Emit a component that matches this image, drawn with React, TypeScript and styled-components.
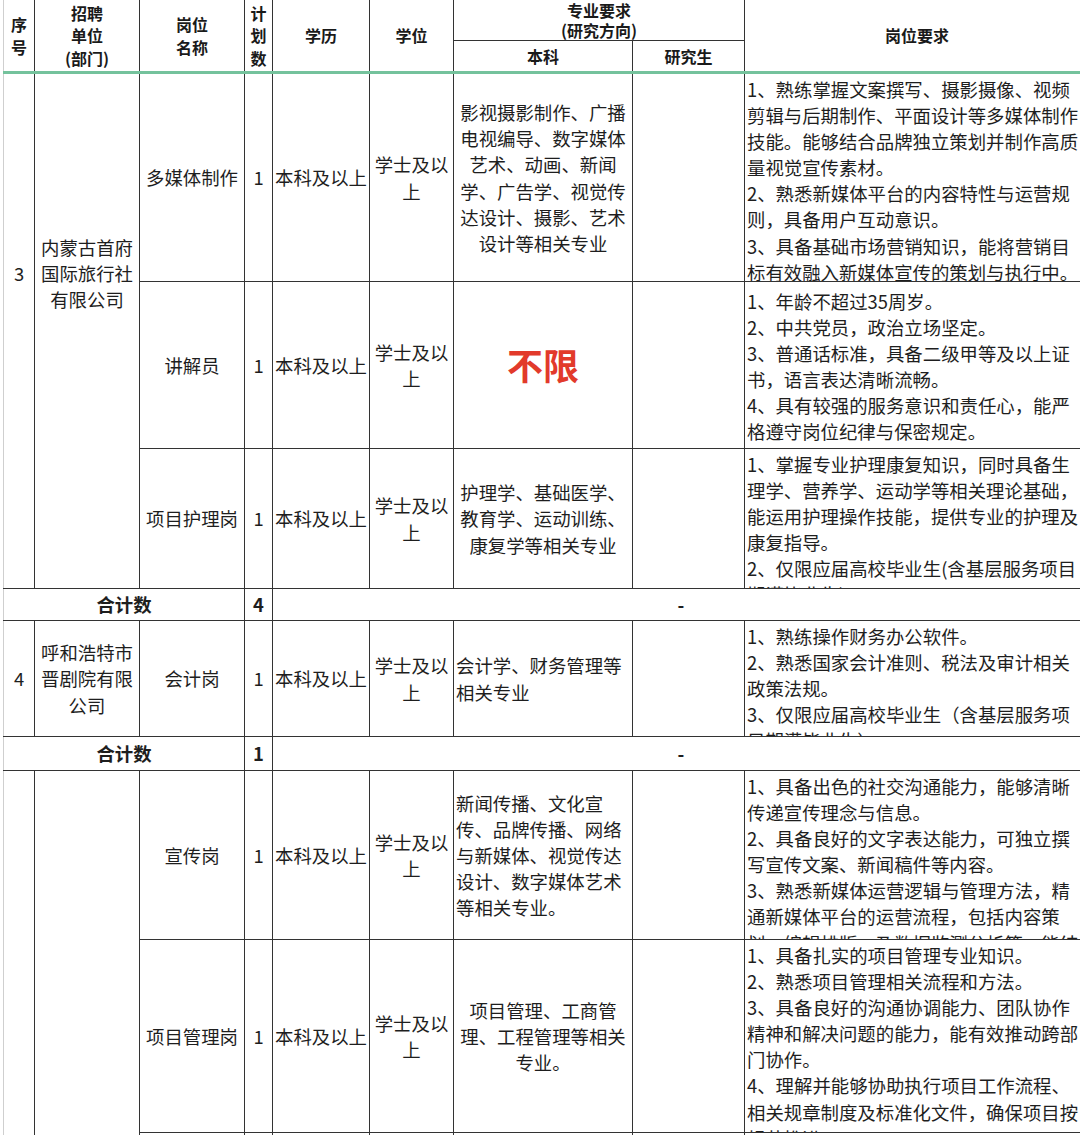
import React from "react";
import styled, { createGlobalStyle } from "styled-components";

const Global = createGlobalStyle`
  html, body { margin: 0; padding: 0; background: #ffffff; }
  body {
    width: 1080px;
    height: 1135px;
    overflow: hidden;
    font-family: "Noto Sans CJK SC", "Noto Sans", sans-serif;
    color: #1e1e1e;
  }
`;

const LINE = "#333333";
const EDGE = "#cfcfcf";
const GREEN = "#74c29c";

const Sheet = styled.table`
  border-collapse: collapse;
  table-layout: fixed;
  width: 1086px;
  margin-left: 3px;
  font-size: 18.4px;
  line-height: 26.1px;
`;

const HeadRow = styled.tr<{ $h: number }>`
  height: ${(p) => p.$h}px;
`;

const Th = styled.th<{ $lh?: number; $green?: boolean; $edge?: boolean }>`
  border: 1px solid ${LINE};
  border-left-color: ${(p) => (p.$edge ? EDGE : LINE)};
  border-top: none;
  border-bottom: ${(p) => (p.$green ? `3px solid ${GREEN}` : `1px solid ${LINE}`)};
  padding: 0;
  font-size: 16px;
  font-weight: 700;
  line-height: ${(p) => p.$lh ?? 22.5}px;
  text-align: center;
  vertical-align: middle;
  color: #1a1a1a;
`;

const Row = styled.tr<{ $h: number }>`
  height: ${(p) => p.$h}px;
`;

const Td = styled.td<{
  $align?: "left" | "center";
  $bold?: boolean;
  $padTop?: number;
  $edge?: boolean;
}>`
  border: 1px solid ${LINE};
  border-left-color: ${(p) => (p.$edge ? EDGE : LINE)};
  padding: ${(p) => (p.$padTop !== undefined ? `${p.$padTop}px 0 0` : "0")};
  padding-left: ${(p) => (p.$align === "left" ? "2px" : "0")};
  text-align: ${(p) => p.$align ?? "center"};
  vertical-align: ${(p) => (p.$padTop !== undefined ? "top" : "middle")};
  font-weight: ${(p) => (p.$bold ? 700 : 400)};
  overflow: hidden;
`;

const ReqCell = styled.td`
  border: 1px solid ${LINE};
  padding: 0;
  vertical-align: top;
  text-align: left;
`;

const ReqBox = styled.div<{ $h: number }>`
  box-sizing: border-box;
  width: 334px;
  height: ${(p) => p.$h}px;
  padding: 2px 0 0 2px;
  overflow: hidden;
  display: flex;
  flex-direction: column;
  justify-content: safe center;
`;

const Red = styled.span`
  color: #e23a2b;
  font-size: 36px;
  font-weight: 700;
  line-height: 40px;
`;

type Job = {
  name: string;
  major: string;
  majorAlign: "left" | "center";
  red?: boolean;
  reqs: string[];
  h: number;
};

type Group = {
  no: string;
  unit: string;
  noPad?: number;
  unitPad?: number;
  total?: string;
  totalH?: number;
  jobs: Job[];
};

const groups: Group[] = [
  {
    no: "3",
    unit: "内蒙古首府国际旅行社有限公司",
    noPad: 186,
    unitPad: 160,
    total: "4",
    totalH: 32,
    jobs: [
      {
        name: "多媒体制作",
        major:
          "影视摄影制作、广播电视编导、数字媒体艺术、动画、新闻学、广告学、视觉传达设计、摄影、艺术设计等相关专业",
        majorAlign: "center",
        h: 208,
        reqs: [
          "1、熟练掌握文案撰写、摄影摄像、视频剪辑与后期制作、平面设计等多媒体制作技能。能够结合品牌独立策划并制作高质量视觉宣传素材。",
          "2、熟悉新媒体平台的内容特性与运营规则，具备用户互动意识。",
          "3、具备基础市场营销知识，能将营销目标有效融入新媒体宣传的策划与执行中。",
        ],
      },
      {
        name: "讲解员",
        major: "不限",
        majorAlign: "center",
        red: true,
        h: 167,
        reqs: [
          "1、年龄不超过35周岁。",
          "2、中共党员，政治立场坚定。",
          "3、普通话标准，具备二级甲等及以上证书，语言表达清晰流畅。",
          "4、具有较强的服务意识和责任心，能严格遵守岗位纪律与保密规定。",
        ],
      },
      {
        name: "项目护理岗",
        major: "护理学、基础医学、教育学、运动训练、康复学等相关专业",
        majorAlign: "center",
        h: 140,
        reqs: [
          "1、掌握专业护理康复知识，同时具备生理学、营养学、运动学等相关理论基础，能运用护理操作技能，提供专业的护理及康复指导。",
          "2、仅限应届高校毕业生(含基层服务项目期满毕业生)。",
        ],
      },
    ],
  },
  {
    no: "4",
    unit: "呼和浩特市晋剧院有限公司",
    total: "1",
    totalH: 34,
    jobs: [
      {
        name: "会计岗",
        major: "会计学、财务管理等相关专业",
        majorAlign: "left",
        h: 116,
        reqs: [
          "1、熟练操作财务办公软件。",
          "2、熟悉国家会计准则、税法及审计相关政策法规。",
          "3、仅限应届高校毕业生（含基层服务项目期满毕业生）。",
        ],
      },
    ],
  },
  {
    no: "",
    unit: "",
    jobs: [
      {
        name: "宣传岗",
        major: "新闻传播、文化宣传、品牌传播、网络与新媒体、视觉传达设计、数字媒体艺术等相关专业。",
        majorAlign: "left",
        h: 169,
        reqs: [
          "1、具备出色的社交沟通能力，能够清晰传递宣传理念与信息。",
          "2、具备良好的文字表达能力，可独立撰写宣传文案、新闻稿件等内容。",
          "3、熟悉新媒体运营逻辑与管理方法，精通新媒体平台的运营流程，包括内容策划、编辑排版、及数据监测分析等，能结合热点策划传播内容。",
        ],
      },
      {
        name: "项目管理岗",
        major: "项目管理、工商管理、工程管理等相关专业。",
        majorAlign: "center",
        h: 193,
        reqs: [
          "1、具备扎实的项目管理专业知识。",
          "2、熟悉项目管理相关流程和方法。",
          "3、具备良好的沟通协调能力、团队协作精神和解决问题的能力，能有效推动跨部门协作。",
          "4、理解并能够协助执行项目工作流程、相关规章制度及标准化文件，确保项目按规范推进。",
        ],
      },
      {
        name: "",
        major: "",
        majorAlign: "center",
        h: 120,
        reqs: [],
      },
    ],
  },
];

function GroupRows({ g }: { g: Group }) {
  const span = g.jobs.length;
  return (
    <>
      {g.jobs.map((j, i) => (
        <Row key={i} $h={j.h}>
          {i === 0 && (
            <>
              <Td rowSpan={span} $edge $padTop={g.noPad}>
                {g.no}
              </Td>
              <Td rowSpan={span} $padTop={g.unitPad}>
                {g.unit}
              </Td>
            </>
          )}
          <Td>{j.name}</Td>
          <Td>{j.name ? "1" : ""}</Td>
          <Td>{j.name ? "本科及以上" : ""}</Td>
          <Td>{j.name ? "学士及以上" : ""}</Td>
          <Td $align={j.majorAlign}>{j.red ? <Red>{j.major}</Red> : j.major}</Td>
          <Td />
          <ReqCell>
            <ReqBox $h={j.h - 1}>
              <div>
                {j.reqs.map((r, k) => (
                  <div key={k}>{r}</div>
                ))}
              </div>
            </ReqBox>
          </ReqCell>
        </Row>
      ))}
      {g.total && (
        <Row $h={g.totalH ?? 33}>
          <Td colSpan={3} $bold $edge>
            合计数
          </Td>
          <Td $bold>{g.total}</Td>
          <Td colSpan={6} $bold>
            -
          </Td>
        </Row>
      )}
    </>
  );
}

export default function App() {
  return (
    <>
      <Global />
      <Sheet>
        <colgroup>
          <col style={{ width: 31 }} />
          <col style={{ width: 105 }} />
          <col style={{ width: 105 }} />
          <col style={{ width: 28 }} />
          <col style={{ width: 97 }} />
          <col style={{ width: 84 }} />
          <col style={{ width: 179 }} />
          <col style={{ width: 112 }} />
          <col style={{ width: 345 }} />
        </colgroup>
        <thead>
          <HeadRow $h={39}>
            <Th rowSpan={2} $green $edge>
              序<br />号
            </Th>
            <Th rowSpan={2} $green>
              招聘<br />单位<br />(部门)
            </Th>
            <Th rowSpan={2} $green>
              岗位<br />名称
            </Th>
            <Th rowSpan={2} $green>
              计<br />划<br />数
            </Th>
            <Th rowSpan={2} $green>
              学历
            </Th>
            <Th rowSpan={2} $green>
              学位
            </Th>
            <Th colSpan={2} $lh={20}>
              专业要求<br />(研究方向)
            </Th>
            <Th rowSpan={2} $green>
              岗位要求
            </Th>
          </HeadRow>
          <HeadRow $h={32}>
            <Th $green>本科</Th>
            <Th $green>研究生</Th>
          </HeadRow>
        </thead>
        <tbody>
          {groups.map((g, i) => (
            <GroupRows key={i} g={g} />
          ))}
        </tbody>
      </Sheet>
    </>
  );
}
